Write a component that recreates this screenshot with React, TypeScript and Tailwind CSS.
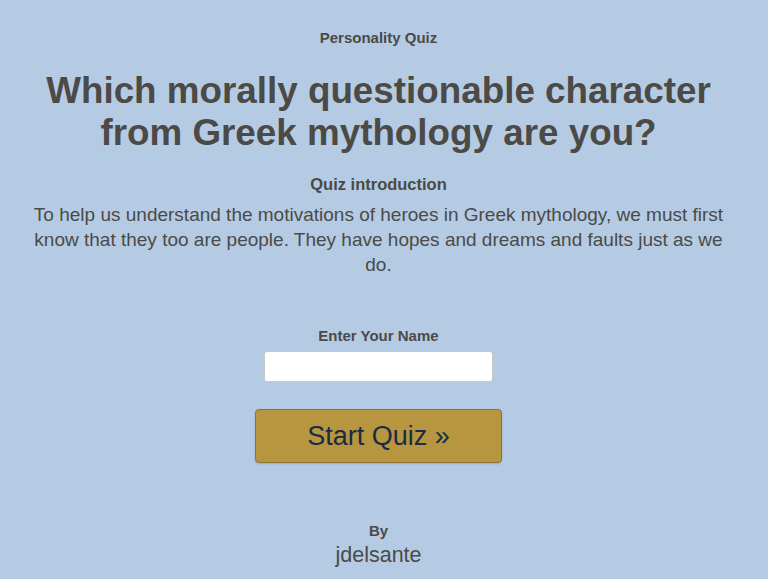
export default function App() {
  return (
    <div className="min-h-[579px] bg-[#b5cbe4] text-[#4b4a46] text-center font-['Liberation_Sans',Arial,sans-serif] pl-[24px] pr-[35px] pt-[28px]">
      <h2 className="text-[15px] font-bold leading-[20px]">Personality Quiz</h2>
      <h1 className="mt-[22px] text-[36.8px] font-bold leading-[42px]">
        Which morally questionable character from Greek mythology are you?
      </h1>
      <h3 className="mt-[20px] text-[16.5px] font-bold leading-[20px]">Quiz introduction</h3>
      <p className="mt-[8px] text-[19px] leading-[25px]">
        To help us understand the motivations of heroes in Greek mythology, we must first know that they too are people. They have hopes and dreams and faults just as we do.
      </p>
      <div className="mt-[49px] flex flex-col items-center">
        <label className="text-[15px] font-bold leading-[20px]">Enter Your Name</label>
        <input
          type="text"
          className="mt-[5px] w-[229px] h-[31px] bg-white border border-[#c9c9c9] rounded-[3px] outline-none px-2"
        />
        <button className="mt-[27px] w-[247px] h-[54px] bg-[#b8953f] border border-[#8f7431] rounded-[4px] text-[#182c45] text-[27px] shadow-[0_1px_2px_rgba(0,0,0,0.15)]">
          Start Quiz »
        </button>
      </div>
      <div className="mt-[59px] flex flex-col items-center">
        <span className="text-[15px] font-bold leading-[18px]">By</span>
        <span className="text-[21.5px] leading-[30px]">jdelsante</span>
      </div>
    </div>
  )
}
